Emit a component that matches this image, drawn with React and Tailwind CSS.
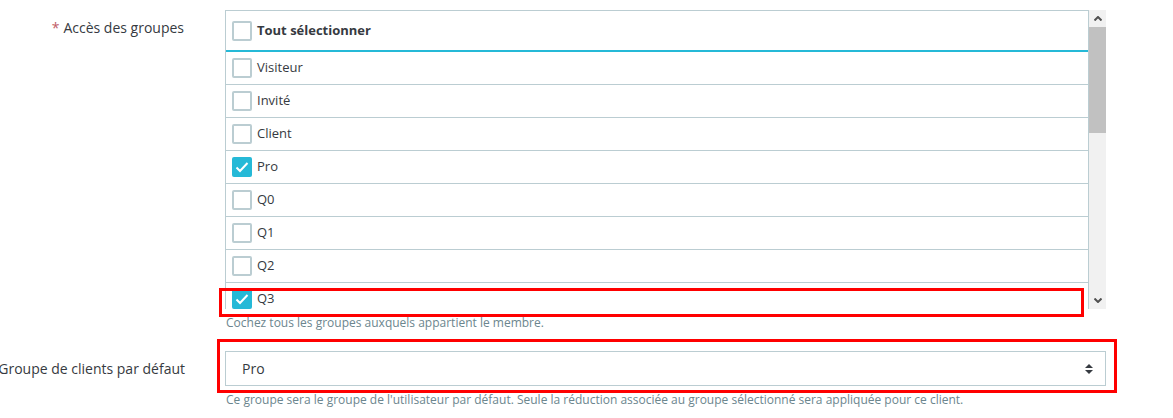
import React from "react";

const groups = [
  { name: "Visiteur", checked: false },
  { name: "Invité", checked: false },
  { name: "Client", checked: false },
  { name: "Pro", checked: true },
  { name: "Q0", checked: false },
  { name: "Q1", checked: false },
  { name: "Q2", checked: false },
  { name: "Q3", checked: true },
];

function Box({ checked }) {
  if (checked) {
    return (
      <span className="flex h-[20px] w-[20px] shrink-0 items-center justify-center rounded-[2px] bg-[#25b9d7]">
        <svg width="14" height="12" viewBox="0 0 14 12">
          <path d="M1.5 6.5 L5 10 L12.5 2" fill="none" stroke="white" strokeWidth="2" />
        </svg>
      </span>
    );
  }
  return <span className="block h-[20px] w-[20px] shrink-0 rounded-[2px] border-2 border-[#bbcdd2] bg-white" />;
}

export default function App() {
  return (
    <div className="relative h-[418px] w-[1173px] overflow-hidden bg-white font-['Open_Sans',sans-serif] text-[#363a41]">
      <div className="flex pt-[10px]">
        <div className="flex w-[225px] shrink-0 justify-end pr-[41px] pt-[8px] text-[14px] leading-[20px] whitespace-nowrap">
          <span className="mr-[4px] text-[#c05c67]">*</span>
          <span>Accès des groupes</span>
        </div>
        <div className="w-[881px] shrink-0">
          <div className="flex h-[299px] overflow-hidden">
            <div className="flex-1 border-x border-t border-[#bbcdd2]">
              <div className="flex h-[41px] items-center gap-[5px] border-b-2 border-[#25b9d7] pl-[6px] text-[13px] font-bold">
                <Box checked={false} />
                <span>Tout sélectionner</span>
              </div>
              {groups.map((g) => (
                <div key={g.name} className="flex h-[33px] items-center gap-[5px] border-b border-[#bbcdd2] pl-[6px] text-[13px]">
                  <Box checked={g.checked} />
                  <span>{g.name}</span>
                </div>
              ))}
            </div>
            <div className="flex w-[17px] shrink-0 flex-col bg-[#f1f1f1]">
              <div className="flex h-[17px] items-center justify-center">
                <svg width="8" height="5" viewBox="0 0 8 5">
                  <path d="M0.5 4.5 L4 1 L7.5 4.5" fill="none" stroke="#505050" strokeWidth="2" />
                </svg>
              </div>
              <div className="h-[106px] bg-[#c1c1c1]" />
              <div className="flex-1" />
              <div className="flex h-[17px] items-center justify-center">
                <svg width="8" height="5" viewBox="0 0 8 5">
                  <path d="M0.5 0.5 L4 4 L7.5 0.5" fill="none" stroke="#505050" strokeWidth="2" />
                </svg>
              </div>
            </div>
          </div>
          <p className="mt-[7px] pl-[1px] text-[12px] leading-[14px] text-[#6c868e]">
            Cochez tous les groupes auxquels appartient le membre.
          </p>
        </div>
      </div>

      <div className="mt-[21px] flex items-center">
        <div className="flex w-[225px] shrink-0 justify-end pr-[40px] text-[14px] leading-[20px] whitespace-nowrap">
          Groupe de clients par défaut
        </div>
        <div className="flex h-[35px] w-[881px] shrink-0 items-center justify-between border border-[#bbcdd2] pl-[16px] pr-[12px] text-[14px]">
          <span>Pro</span>
          <svg width="8" height="12" viewBox="0 0 8 12">
            <path d="M0 5 L4 1 L8 5 Z" fill="#363a41" />
            <path d="M0 7 L4 11 L8 7 Z" fill="#363a41" />
          </svg>
        </div>
      </div>
      <p className="mt-[7px] pl-[226px] text-[12px] leading-[14px] text-[#6c868e]">
        Ce groupe sera le groupe de l'utilisateur par défaut. Seule la réduction associée au groupe sélectionné sera appliquée pour ce client.
      </p>

      <div className="pointer-events-none absolute left-[219px] top-[288px] h-[29px] w-[865px] border-[3px] border-[#ff0000]" />
      <div className="pointer-events-none absolute left-[217px] top-[339px] h-[54px] w-[900px] border-[3px] border-[#ff0000]" />
    </div>
  );
}
